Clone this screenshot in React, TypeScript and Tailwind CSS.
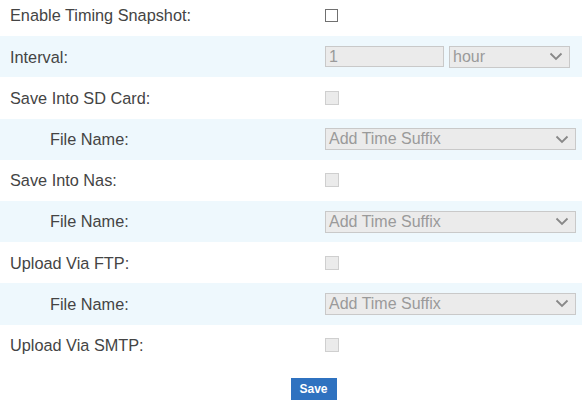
import React from "react";

const font = { fontFamily: '"Liberation Sans", Arial, sans-serif' };

function Chevron() {
  return (
    <svg width="14" height="9" viewBox="0 0 14 9" className="shrink-0">
      <path d="M1.5 1.5 L7 7 L12.5 1.5" fill="none" stroke="#888888" strokeWidth="1.8" />
    </svg>
  );
}

function Checkbox({ enabled = false }: { enabled?: boolean }) {
  return (
    <div
      className={
        enabled
          ? "w-[13px] h-[13px] border border-[#707070] bg-white"
          : "w-[14px] h-[14px] border border-[#cfcfcf] bg-[#ebebeb]"
      }
    />
  );
}

function Select({ value, className }: { value: string; className: string }) {
  return (
    <div
      className={
        "h-[22px] flex items-center justify-between pl-[3px] pr-[6px] border border-[#c9c9c9] bg-[#ebebeb] text-[#9a9a9a] text-[16px] " +
        className
      }
    >
      <span>{value}</span>
      <Chevron />
    </div>
  );
}

type Row = { label: string; indent?: boolean; control: React.ReactNode };

const rows: Row[] = [
  { label: "Enable Timing Snapshot:", control: <Checkbox enabled /> },
  {
    label: "Interval:",
    control: (
      <div className="flex items-center gap-[5px]">
        <div className="w-[119px] h-[21px] flex items-center pl-[3px] border border-[#c9c9c9] bg-[#ebebeb] text-[#9a9a9a] text-[16px]">
          1
        </div>
        <Select value="hour" className="w-[121px]" />
      </div>
    ),
  },
  { label: "Save Into SD Card:", control: <Checkbox /> },
  { label: "File Name:", indent: true, control: <Select value="Add Time Suffix" className="w-[251px]" /> },
  { label: "Save Into Nas:", control: <Checkbox /> },
  { label: "File Name:", indent: true, control: <Select value="Add Time Suffix" className="w-[251px]" /> },
  { label: "Upload Via FTP:", control: <Checkbox /> },
  { label: "File Name:", indent: true, control: <Select value="Add Time Suffix" className="w-[251px]" /> },
  { label: "Upload Via SMTP:", control: <Checkbox /> },
];

export default function App() {
  return (
    <div className="w-[582px] h-[409px] bg-white overflow-hidden" style={font}>
      <div className="-mt-[5px]">
        {rows.map((row, i) => (
          <div
            key={i}
            className={
              "h-[41.2px] flex items-center " + (i % 2 === 1 ? "bg-[#eef8fd]" : "bg-white")
            }
          >
            <div
              className={
                "w-[325px] shrink-0 text-[16.3px] text-[#444444] " +
                (row.indent ? "pl-[50px]" : "pl-[10px]")
              }
            >
              {row.label}
            </div>
            {row.control}
          </div>
        ))}
      </div>
      <div className="flex justify-center mt-[12px] pl-[45px]">
        <button className="w-[46px] h-[22px] bg-[#2f72c0] text-white text-[12px] font-bold">
          Save
        </button>
      </div>
    </div>
  );
}
